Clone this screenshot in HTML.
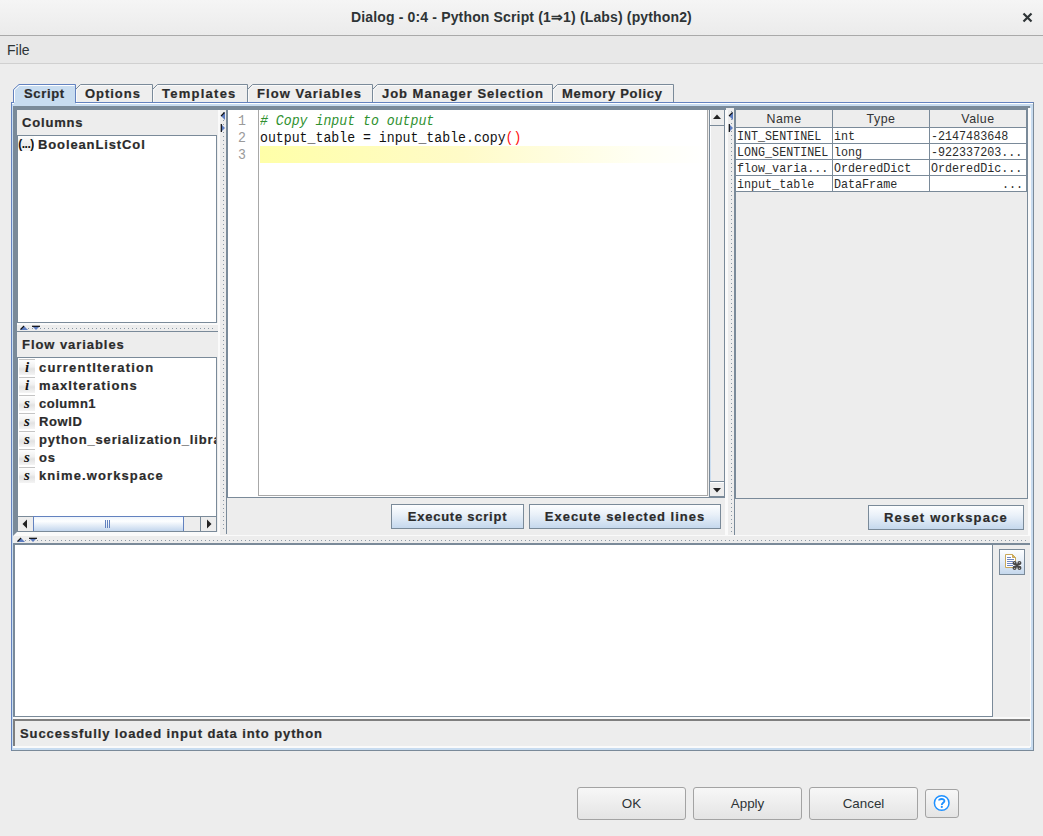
<!DOCTYPE html>
<html><head><meta charset="utf-8">
<style>
*{margin:0;padding:0;box-sizing:border-box}
html,body{width:1043px;height:836px;overflow:hidden;background:#ededed;font-family:"Liberation Sans",sans-serif;color:#222}
.a{position:absolute}
.t{position:absolute;white-space:nowrap;font-weight:bold;font-size:13px;letter-spacing:0.85px;color:#2b2b2b;line-height:15px;-webkit-text-stroke:0.2px #2b2b2b}
.m{position:absolute;white-space:nowrap;font-family:"Liberation Mono",monospace;font-size:12px;color:#2b2b2b;line-height:14px}
.jb{position:absolute;border:1px solid #7a8a99;background:linear-gradient(#fdfeff 0%,#eaf1f9 40%,#c5d8ed 100%)}
.jb span{position:absolute;left:0;right:0;text-align:center;white-space:nowrap;font-weight:bold;font-size:13px;letter-spacing:0.85px;color:#2b2b2b;line-height:15px;-webkit-text-stroke:0.2px #2b2b2b}
.gb{position:absolute;border:1px solid #a3a3a3;border-radius:3px;background:linear-gradient(#f7f7f7,#e4e4e4);font-size:13.4px;color:#2e3436;text-align:center}
</style></head><body>
<div class="a" style="left:0px;top:0px;width:1043px;height:35px;background:linear-gradient(#f5f5f5,#ebebeb);"></div>
<div class="a" style="left:0px;top:35px;width:1043px;height:1px;background:#a9a9a9;"></div>
<div class="a" style="left:0;width:1043px;text-align:center;top:9px;font-size:14px;letter-spacing:0.15px;font-weight:bold;color:#2e3436;white-space:nowrap;line-height:16px">Dialog - 0:4 - Python Script (1⇒1) (Labs) (python2)</div>
<svg class="a" style="left:1022px;top:12px" width="11" height="11"><path d="M1.5 1.5L9.5 9.5M9.5 1.5L1.5 9.5" stroke="#2e3436" stroke-width="2.2"/></svg>
<div class="a" style="left:0px;top:36px;width:1043px;height:27px;background:#e8e8e8;"></div>
<div class="a" style="left:0px;top:63px;width:1043px;height:1px;background:#d0d0d0;"></div>
<div class="a" style="left:7px;top:42px;font-size:14px;color:#2e3436;line-height:16px">File</div>
<svg class="a" style="left:0;top:80px" width="700" height="26"><path d="M75.5 22 V9.5 L80.5 4.5 H152.5 V22" fill="#eeeeee" stroke="#7a8a99" stroke-width="1"/><path d="M76.5 22 V10 L81 5.5 H151.5" fill="none" stroke="#fafafa" stroke-width="1"/><path d="M152.5 22 V9.5 L157.5 4.5 H247.5 V22" fill="#eeeeee" stroke="#7a8a99" stroke-width="1"/><path d="M153.5 22 V10 L158 5.5 H246.5" fill="none" stroke="#fafafa" stroke-width="1"/><path d="M247.5 22 V9.5 L252.5 4.5 H372.5 V22" fill="#eeeeee" stroke="#7a8a99" stroke-width="1"/><path d="M248.5 22 V10 L253 5.5 H371.5" fill="none" stroke="#fafafa" stroke-width="1"/><path d="M372.5 22 V9.5 L377.5 4.5 H552.5 V22" fill="#eeeeee" stroke="#7a8a99" stroke-width="1"/><path d="M373.5 22 V10 L378 5.5 H551.5" fill="none" stroke="#fafafa" stroke-width="1"/><path d="M552.5 22 V9.5 L557.5 4.5 H673.5 V22" fill="#eeeeee" stroke="#7a8a99" stroke-width="1"/><path d="M553.5 22 V10 L558 5.5 H672.5" fill="none" stroke="#fafafa" stroke-width="1"/><path d="M13.5 24 V9.5 L19 4.5 H75.5 V24" fill="#c8dcf0" stroke="#6382bf" stroke-width="1"/><path d="M14.5 24 V10 L19.5 5.5 H74.5" fill="none" stroke="#ffffff" stroke-width="1"/></svg>
<div class="t" style="left:24px;top:86px;letter-spacing:0.6699999999999999px;">Script</div>
<div class="t" style="left:85px;top:86px;letter-spacing:0.97px;">Options</div>
<div class="t" style="left:162px;top:86px;letter-spacing:1.25px;">Templates</div>
<div class="t" style="left:257px;top:86px;letter-spacing:1.05px;">Flow Variables</div>
<div class="t" style="left:382px;top:86px;letter-spacing:0.97px;">Job Manager Selection</div>
<div class="t" style="left:562px;top:86px;letter-spacing:0.6799999999999999px;">Memory Policy</div>
<div class="a" style="left:11px;top:102px;width:1023px;height:649px;background:#c8dcf0;border-left:1px solid #6382bf;border-top:1px solid #6382bf;border-right:1px solid #7a8a99;border-bottom:1px solid #7a8a99"></div>
<div class="a" style="left:14px;top:102px;width:61px;height:2px;background:#c8dcf0;"></div>
<div class="a" style="left:12px;top:103px;width:2px;height:1px;background:#fff;"></div>
<div class="a" style="left:76px;top:103px;width:957px;height:1px;background:#fff;"></div>
<div class="a" style="left:1030px;top:108px;width:1px;height:639px;background:#fafafa;"></div>
<div class="a" style="left:13px;top:106px;width:1017px;height:2px;background:#7a8a99;"></div>
<div class="a" style="left:13px;top:108px;width:1017px;height:427px;background:#ededed;"></div>
<div class="a" style="left:13px;top:108px;width:4px;height:424px;background:#7a8a99;"></div>
<div class="a" style="left:17px;top:108px;width:202px;height:2px;background:#7a8a99;"></div>
<div class="a" style="left:17px;top:110px;width:201px;height:25px;background:#ededed;"></div>
<div class="a" style="left:217px;top:110px;width:1px;height:25px;background:#ededed;"></div>
<div class="t" style="left:22px;top:115px;letter-spacing:0.83px;">Columns</div>
<div class="a" style="left:17px;top:135px;width:200px;height:188px;background:#fff;border:1px solid #7a8a99;border-right:1px solid #7a8a99"></div>
<div class="a" style="left:18px;top:136px;width:16px;height:15px;background:linear-gradient(#fdfdfd,#ececec 55%,#f7f7f7)"></div>
<svg class="a" style="left:18px;top:136px" width="16" height="15"><text x="8" y="12" text-anchor="middle" font-family="Liberation Sans" font-weight="bold" font-size="12" fill="#111" letter-spacing="-0.5">(...)</text></svg>
<div class="t" style="left:38px;top:137px;letter-spacing:0.88px;">BooleanListCol</div>
<div class="a" style="left:17px;top:323px;width:202px;height:2px;background:#fafafa;"></div>
<div class="a" style="left:17px;top:325px;width:202px;height:6px;background:#ededed;"></div>
<div class="a" style="left:28px;top:328px;width:188px;height:1px;background:repeating-linear-gradient(90deg,#7a8a99 0 1px,transparent 1px 4px);opacity:.85"></div>
<svg class="a" style="left:20px;top:325px" width="22" height="6"><path d="M0 5L4 1L8 5Z" fill="#5b7bc0"/><path d="M0.5 4.5L4 1" stroke="#111" stroke-width="1.1"/><path d="M12 1H20L16 5Z" fill="#5b7bc0"/><path d="M12 1.3H20" stroke="#111" stroke-width="1.2"/></svg>
<div class="a" style="left:17px;top:331px;width:202px;height:1px;background:#7a8a99;"></div>
<div class="a" style="left:17px;top:332px;width:201px;height:25px;background:#ededed;"></div>
<div class="a" style="left:217px;top:332px;width:1px;height:25px;background:#ededed;"></div>
<div class="t" style="left:22px;top:337px;letter-spacing:0.94px;">Flow variables</div>
<div class="a" style="left:17px;top:357px;width:200px;height:175px;background:#fff;border:1px solid #7a8a99"></div>
<div class="a" style="left:18px;top:358px;width:198px;height:158px;overflow:hidden"><div class="a" style="left:1px;top:1px;width:16px;height:16px;border-top:1px solid #c4c4c4;background:linear-gradient(#fefefe,#f0f0f0 45%,#e2e2e2 60%,#f4f4f4)"></div><div class="a" style="left:1px;top:1px;width:16px;text-align:center;font-family:'Liberation Serif';font-style:italic;font-weight:bold;font-size:15px;line-height:17px;color:#111">i</div><div class="t" style="left:21px;top:2px;letter-spacing:1.2000000000000002px">currentIteration</div><div class="a" style="left:1px;top:19px;width:16px;height:16px;border-top:1px solid #c4c4c4;background:linear-gradient(#fefefe,#f0f0f0 45%,#e2e2e2 60%,#f4f4f4)"></div><div class="a" style="left:1px;top:19px;width:16px;text-align:center;font-family:'Liberation Serif';font-style:italic;font-weight:bold;font-size:15px;line-height:17px;color:#111">i</div><div class="t" style="left:21px;top:20px;letter-spacing:1.1px">maxIterations</div><div class="a" style="left:1px;top:37px;width:16px;height:16px;border-top:1px solid #c4c4c4;background:linear-gradient(#fefefe,#f0f0f0 45%,#e2e2e2 60%,#f4f4f4)"></div><div class="a" style="left:1px;top:37px;width:16px;text-align:center;font-family:'Liberation Serif';font-style:italic;font-weight:bold;font-size:15px;line-height:16px;color:#111">s</div><div class="t" style="left:21px;top:38px;letter-spacing:0.52px">column1</div><div class="a" style="left:1px;top:55px;width:16px;height:16px;border-top:1px solid #c4c4c4;background:linear-gradient(#fefefe,#f0f0f0 45%,#e2e2e2 60%,#f4f4f4)"></div><div class="a" style="left:1px;top:55px;width:16px;text-align:center;font-family:'Liberation Serif';font-style:italic;font-weight:bold;font-size:15px;line-height:16px;color:#111">s</div><div class="t" style="left:21px;top:56px;letter-spacing:0.64px">RowID</div><div class="a" style="left:1px;top:73px;width:16px;height:16px;border-top:1px solid #c4c4c4;background:linear-gradient(#fefefe,#f0f0f0 45%,#e2e2e2 60%,#f4f4f4)"></div><div class="a" style="left:1px;top:73px;width:16px;text-align:center;font-family:'Liberation Serif';font-style:italic;font-weight:bold;font-size:15px;line-height:16px;color:#111">s</div><div class="t" style="left:21px;top:74px;letter-spacing:0.85px">python_serialization_library</div><div class="a" style="left:1px;top:91px;width:16px;height:16px;border-top:1px solid #c4c4c4;background:linear-gradient(#fefefe,#f0f0f0 45%,#e2e2e2 60%,#f4f4f4)"></div><div class="a" style="left:1px;top:91px;width:16px;text-align:center;font-family:'Liberation Serif';font-style:italic;font-weight:bold;font-size:15px;line-height:16px;color:#111">s</div><div class="t" style="left:21px;top:92px;letter-spacing:0.73px">os</div><div class="a" style="left:1px;top:109px;width:16px;height:16px;border-top:1px solid #c4c4c4;background:linear-gradient(#fefefe,#f0f0f0 45%,#e2e2e2 60%,#f4f4f4)"></div><div class="a" style="left:1px;top:109px;width:16px;text-align:center;font-family:'Liberation Serif';font-style:italic;font-weight:bold;font-size:15px;line-height:16px;color:#111">s</div><div class="t" style="left:21px;top:110px;letter-spacing:1.1px">knime.workspace</div></div>
<div class="a" style="left:18px;top:516px;width:198px;height:15px;background:#ededed;border-top:1px solid #7a8a99"></div>
<div class="a" style="left:18px;top:531px;width:199px;height:1px;background:#7a8a99;"></div>
<svg class="a" style="left:18px;top:517px" width="15" height="14"><path d="M4.5 7L9 2.5V11.5Z" fill="#222"/></svg>
<div class="a" style="left:33px;top:516px;width:151px;height:15px;background:linear-gradient(#eef4fb,#fdfeff 30%,#c3d6ed);border:1px solid #6382bf;border-bottom:none"></div>
<div class="a" style="left:105px;top:520px;width:1px;height:8px;background:#6382bf;box-shadow:2px 0 0 #6382bf,4px 0 0 #6382bf"></div>
<div class="a" style="left:200px;top:516px;width:1px;height:15px;background:#7a8a99;"></div>
<div class="a" style="left:201px;top:517px;width:14px;height:14px;background:#ededed;"></div>
<svg class="a" style="left:201px;top:517px" width="15" height="14"><path d="M10.5 7L6 2.5V11.5Z" fill="#222"/></svg>
<svg class="a" style="left:13px;top:532px" width="5" height="5"><path d="M0 0H4L0 4Z" fill="#7a8a99"/></svg>
<div class="a" style="left:218px;top:110px;width:2px;height:425px;background:#fafafa;"></div>
<div class="a" style="left:220px;top:110px;width:6px;height:425px;background:#ededed;"></div>
<div class="a" style="left:217px;top:108px;width:9px;height:2px;background:#7a8a99;"></div>
<div class="a" style="left:223px;top:112px;width:1px;height:420px;background:repeating-linear-gradient(180deg,#7a8a99 0 1px,transparent 1px 4px);opacity:.85"></div>
<svg class="a" style="left:220px;top:112px" width="6" height="22"><path d="M5 0L1 4L5 8Z" fill="#5b7bc0"/><path d="M4.5 0.5L1 4" stroke="#111" stroke-width="1.1"/><path d="M1 12V20L5 16Z" fill="#5b7bc0"/><path d="M1.3 12V20" stroke="#111" stroke-width="1.2"/></svg>
<div class="a" style="left:226px;top:108px;width:500px;height:2px;background:#7a8a99;"></div>
<div class="a" style="left:226px;top:110px;width:1px;height:424px;background:#7a8a99;"></div>
<div class="a" style="left:227px;top:110px;width:1px;height:388px;background:#7a8a99;"></div>
<div class="a" style="left:228px;top:110px;width:481px;height:387px;background:#fff;"></div>
<div class="a" style="left:258px;top:110px;width:1px;height:386px;background:#a8a8a8;"></div>
<div class="a" style="left:258px;top:495px;width:450px;height:1px;background:#a8a8a8;"></div>
<div class="a" style="left:707px;top:110px;width:1px;height:386px;background:#a8a8a8;"></div>
<div class="a" style="left:708px;top:110px;width:1px;height:387px;background:#ededed;"></div>
<div class="a" style="left:227px;top:497px;width:482px;height:1px;background:#7a8a99;"></div>
<div class="a" style="left:260px;top:146px;width:447px;height:17px;background:linear-gradient(90deg,#ffffa8,#fffbc8 45%,#fffff4 85%,#ffffff)"></div>
<div class="m" style="left:238px;top:113px;font-size:14px;color:#9a9a9a;line-height:17px;transform:scaleX(0.943);transform-origin:0 0">1<br>2<br>3</div>
<div class="m" style="left:260px;top:113px;font-size:14px;line-height:17px;color:#111;transform:scaleX(0.943);transform-origin:0 0"><i style="color:#2f912f">#&nbsp;Copy&nbsp;input&nbsp;to&nbsp;output</i><br>output_table&nbsp;=&nbsp;input_table.copy<span style="color:#ff1010">()</span></div>
<div class="a" style="left:709px;top:110px;width:16px;height:388px;background:#ededed;border-left:1px solid #7a8a99;border-right:1px solid #7a8a99"></div>
<div class="a" style="left:710px;top:110px;width:1px;height:371px;background:linear-gradient(#fff,#c8dcf0);"></div>
<div class="a" style="left:710px;top:125px;width:14px;height:1px;background:#7a8a99;"></div>
<div class="a" style="left:710px;top:481px;width:14px;height:1px;background:#7a8a99;"></div>
<div class="a" style="left:710px;top:482px;width:14px;height:1px;background:#fff;"></div>
<div class="a" style="left:709px;top:496px;width:16px;height:2px;background:#7a8a99;"></div>
<svg class="a" style="left:710px;top:110px" width="14" height="15"><path d="M3 9L7 4.5L11 9Z" fill="#222"/></svg>
<svg class="a" style="left:710px;top:482px" width="14" height="14"><path d="M3 6L11 6L7 10.5Z" fill="#222"/></svg>
<div class="jb" style="left:391px;top:504px;width:133px;height:25px"><span style="top:4px;letter-spacing:0.76px">Execute script</span></div>
<div class="jb" style="left:529px;top:504px;width:192px;height:25px"><span style="top:4px;letter-spacing:0.98px">Execute selected lines</span></div>
<div class="a" style="left:725px;top:110px;width:3px;height:425px;background:#fafafa;"></div>
<div class="a" style="left:728px;top:110px;width:6px;height:425px;background:#ededed;"></div>
<div class="a" style="left:731px;top:111px;width:1px;height:421px;background:repeating-linear-gradient(180deg,#7a8a99 0 1px,transparent 1px 4px);opacity:.85"></div>
<svg class="a" style="left:728px;top:112px" width="6" height="22"><path d="M5 0L1 4L5 8Z" fill="#5b7bc0"/><path d="M4.5 0.5L1 4" stroke="#111" stroke-width="1.1"/><path d="M1 12V20L5 16Z" fill="#5b7bc0"/><path d="M1.3 12V20" stroke="#111" stroke-width="1.2"/></svg>
<div class="a" style="left:734px;top:108px;width:294px;height:2px;background:#7a8a99;"></div>
<div class="a" style="left:1028px;top:108px;width:2px;height:427px;background:#fafafa;"></div>
<div class="a" style="left:734px;top:110px;width:2px;height:389px;background:#7a8a99;"></div>
<div class="a" style="left:734px;top:499px;width:1px;height:36px;background:#7a8a99;"></div>
<div class="a" style="left:736px;top:110px;width:292px;height:389px;background:#ededed;"></div>
<div class="a" style="left:736px;top:110px;width:291px;height:17px;background:#ededed;"></div>
<div class="a" style="left:736px;top:111px;width:96px;height:17px;text-align:center;font-size:12.4px;line-height:17px;color:#333;letter-spacing:0.5px">Name</div>
<div class="a" style="left:833px;top:111px;width:96px;height:17px;text-align:center;font-size:12.4px;line-height:17px;color:#333;letter-spacing:0.5px">Type</div>
<div class="a" style="left:930px;top:111px;width:96px;height:17px;text-align:center;font-size:12.4px;line-height:17px;color:#333;letter-spacing:0.5px">Value</div>
<div class="a" style="left:736px;top:127px;width:291px;height:1px;background:#7a8a99;"></div>
<div class="a" style="left:736px;top:128px;width:290px;height:64px;background:#fff;"></div>
<div class="a" style="left:736px;top:143px;width:291px;height:1px;background:#7a8a99;"></div>
<div class="a" style="left:736px;top:159px;width:291px;height:1px;background:#7a8a99;"></div>
<div class="a" style="left:736px;top:175px;width:291px;height:1px;background:#7a8a99;"></div>
<div class="a" style="left:736px;top:191px;width:291px;height:1px;background:#7a8a99;"></div>
<div class="a" style="left:832px;top:110px;width:1px;height:82px;background:#7a8a99;"></div>
<div class="a" style="left:929px;top:110px;width:1px;height:82px;background:#7a8a99;"></div>
<div class="a" style="left:1026px;top:110px;width:1px;height:82px;background:#7a8a99;"></div>
<div class="a" style="left:1027px;top:110px;width:1px;height:389px;background:#7a8a99;"></div>
<div class="a" style="left:736px;top:498px;width:292px;height:1px;background:#7a8a99;"></div>
<div class="m" style="left:737px;top:129px;font-size:13px;line-height:15px;transform:scaleX(0.9);transform-origin:0 0">INT_SENTINEL</div>
<div class="m" style="left:834px;top:129px;font-size:13px;line-height:15px;transform:scaleX(0.9);transform-origin:0 0">int</div>
<div class="m" style="left:931px;top:129px;font-size:13px;line-height:15px;transform:scaleX(0.9);transform-origin:0 0">-2147483648</div>
<div class="m" style="left:737px;top:145px;font-size:13px;line-height:15px;transform:scaleX(0.9);transform-origin:0 0">LONG_SENTINEL</div>
<div class="m" style="left:834px;top:145px;font-size:13px;line-height:15px;transform:scaleX(0.9);transform-origin:0 0">long</div>
<div class="m" style="left:931px;top:145px;font-size:13px;line-height:15px;transform:scaleX(0.9);transform-origin:0 0">-922337203...</div>
<div class="m" style="left:737px;top:161px;font-size:13px;line-height:15px;transform:scaleX(0.9);transform-origin:0 0">flow_varia...</div>
<div class="m" style="left:834px;top:161px;font-size:13px;line-height:15px;transform:scaleX(0.9);transform-origin:0 0">OrderedDict</div>
<div class="m" style="left:931px;top:161px;font-size:13px;line-height:15px;transform:scaleX(0.9);transform-origin:0 0">OrderedDic...</div>
<div class="m" style="left:737px;top:177px;font-size:13px;line-height:15px;transform:scaleX(0.9);transform-origin:0 0">input_table</div>
<div class="m" style="left:834px;top:177px;font-size:13px;line-height:15px;transform:scaleX(0.9);transform-origin:0 0">DataFrame</div>
<div class="m" style="left:1002px;top:177px;font-size:13px;line-height:15px;transform:scaleX(0.9);transform-origin:0 0">...</div>
<div class="jb" style="left:868px;top:505px;width:156px;height:25px"><span style="top:4px;letter-spacing:1.1800000000000002px">Reset workspace</span></div>
<div class="a" style="left:13px;top:532px;width:206px;height:4px;background:#fafafa;"></div>
<div class="a" style="left:219px;top:535px;width:811px;height:2px;background:#fafafa;"></div>
<svg class="a" style="left:13px;top:532px" width="5" height="5"><path d="M0 0H4L0 4Z" fill="#7a8a99"/></svg>
<div class="a" style="left:13px;top:536px;width:1017px;height:7px;background:#ededed;"></div>
<div class="a" style="left:25px;top:540px;width:1004px;height:1px;background:repeating-linear-gradient(90deg,#7a8a99 0 1px,transparent 1px 4px);opacity:.85"></div>
<svg class="a" style="left:17px;top:537px" width="22" height="6"><path d="M0 5L4 1L8 5Z" fill="#5b7bc0"/><path d="M0.5 4.5L4 1" stroke="#111" stroke-width="1.1"/><path d="M12 1H20L16 5Z" fill="#5b7bc0"/><path d="M12 1.3H20" stroke="#111" stroke-width="1.2"/></svg>
<div class="a" style="left:13px;top:543px;width:1017px;height:2px;background:#7a8a99;"></div>
<div class="a" style="left:13px;top:545px;width:2px;height:174px;background:#7a8a99;"></div>
<div class="a" style="left:15px;top:545px;width:978px;height:171px;background:#fff;"></div>
<div class="a" style="left:992px;top:545px;width:1px;height:172px;background:#7a8a99;"></div>
<div class="a" style="left:15px;top:716px;width:977px;height:1px;background:#7a8a99;"></div>
<div class="a" style="left:993px;top:545px;width:37px;height:173px;background:#ededed;"></div>
<div class="jb" style="left:999px;top:549px;width:26px;height:26px"><span style="top:4px;letter-spacing:0.85px"></span></div>
<svg class="a" style="left:1003px;top:552px" width="20" height="20"><path d="M2.5 2.5H9.5L12.5 5.5V15.5H2.5Z" fill="#fff" stroke="#c9a85a"/><path d="M9.5 2.5V5.5H12.5Z" fill="#d9b25c" stroke="#c9a85a"/><path d="M4 5.5H8M4 7.5H11M4 9.5H10M4 11.5H10M4 13.5H10" stroke="#6f86bf" stroke-width="1"/><rect x="10" y="9.5" width="8" height="8" fill="#f4f8fc"/><path d="M11.5 11L16.5 16M16.5 11L11.5 16" stroke="#484848" stroke-width="2.2"/><circle cx="11.6" cy="11.1" r="1.4" fill="none" stroke="#484848" stroke-width="1.3"/><circle cx="16.4" cy="11.1" r="1.4" fill="none" stroke="#484848" stroke-width="1.3"/><circle cx="11.6" cy="15.9" r="1.4" fill="none" stroke="#484848" stroke-width="1.3"/><circle cx="16.4" cy="15.9" r="1.4" fill="none" stroke="#484848" stroke-width="1.3"/></svg>
<div class="a" style="left:13px;top:717px;width:1017px;height:2px;background:#fafafa;"></div>
<div class="a" style="left:13px;top:719px;width:1017px;height:27px;background:#ededed;border-top:2px solid #7f7f7f;border-left:2px solid #7f7f7f"></div>
<div class="a" style="left:13px;top:746px;width:1017px;height:2px;background:#fafafa;"></div>
<div class="t" style="left:20px;top:726px;letter-spacing:0.9px;">Successfully loaded input data into python</div>
<div class="gb" style="left:577px;top:787px;width:109px;height:33px;line-height:31px">OK</div>
<div class="gb" style="left:693px;top:787px;width:109px;height:33px;line-height:31px">Apply</div>
<div class="gb" style="left:809px;top:787px;width:109px;height:33px;line-height:31px">Cancel</div>
<div class="gb" style="left:925px;top:789px;width:34px;height:29px"></div>
<svg class="a" style="left:932px;top:794px" width="20" height="18"><circle cx="9.7" cy="9" r="7.3" fill="#fff" stroke="#1e90ff" stroke-width="1.5"/><path d="M7.1 6.6C7.1 4.6 12.4 4.2 12.4 6.9C12.4 8.7 9.8 8.9 9.8 10.9" fill="none" stroke="#1e90ff" stroke-width="1.9"/><circle cx="9.8" cy="12.9" r="1.1" fill="#1e90ff"/></svg>
</body></html>
